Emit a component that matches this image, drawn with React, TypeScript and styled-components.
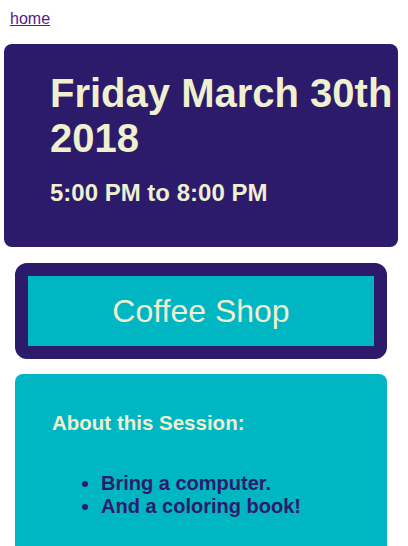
import React from "react";
import styled, { createGlobalStyle } from "styled-components";

const navy = "#2c1a6b";
const cream = "#eef0d0";
const teal = "#00b6c3";

const GlobalStyle = createGlobalStyle`
  body {
    margin: 0;
    background: #ffffff;
    font-family: "Liberation Sans", Arial, Helvetica, sans-serif;
  }
`;

const Page = styled.div`
  display: flex;
  flex-direction: column;
  padding: 10px 10px 0 4px;
`;

const HomeLink = styled.a`
  align-self: flex-start;
  margin-left: 6px;
  font-size: 16px;
  color: #551a8b;
  text-decoration: underline;
`;

const DateCard = styled.header`
  margin-top: 16px;
  background: ${navy};
  border-radius: 8px;
  padding: 27px 0 40px 46px;
  color: ${cream};
`;

const DateTitle = styled.h1`
  margin: 0 0 18px;
  font-size: 40px;
  font-weight: bold;
`;

const TimeRange = styled.h2`
  margin: 0;
  font-size: 24px;
  font-weight: bold;
`;

const Section = styled.div`
  display: flex;
  flex-direction: column;
  gap: 15px;
  margin: 16px 11px 0;
`;

const Venue = styled.div`
  background: ${teal};
  border: 13px solid ${navy};
  border-radius: 12px;
  padding: 17px 0 16px;
  text-align: center;
  color: ${cream};
  font-size: 32px;
`;

const AboutCard = styled.section`
  background: ${teal};
  border-radius: 8px;
  padding: 37px 37px 40px;
`;

const AboutTitle = styled.h3`
  margin: 0 0 37px;
  font-size: 20.5px;
  font-weight: bold;
  color: ${cream};
`;

const Bullets = styled.ul`
  margin: 0;
  padding-left: 49px;
  font-size: 20px;
  font-weight: bold;
  color: ${navy};
`;

export default function App() {
  const notes = ["Bring a computer.", "And a coloring book!"];
  return (
    <>
      <GlobalStyle />
      <Page>
        <HomeLink href="#">home</HomeLink>
        <DateCard>
          <DateTitle>Friday March 30th 2018</DateTitle>
          <TimeRange>5:00 PM to 8:00 PM</TimeRange>
        </DateCard>
        <Section>
          <Venue>Coffee Shop</Venue>
          <AboutCard>
            <AboutTitle>About this Session:</AboutTitle>
            <Bullets>
              {notes.map((n) => (
                <li key={n}>{n}</li>
              ))}
            </Bullets>
          </AboutCard>
        </Section>
      </Page>
    </>
  );
}
